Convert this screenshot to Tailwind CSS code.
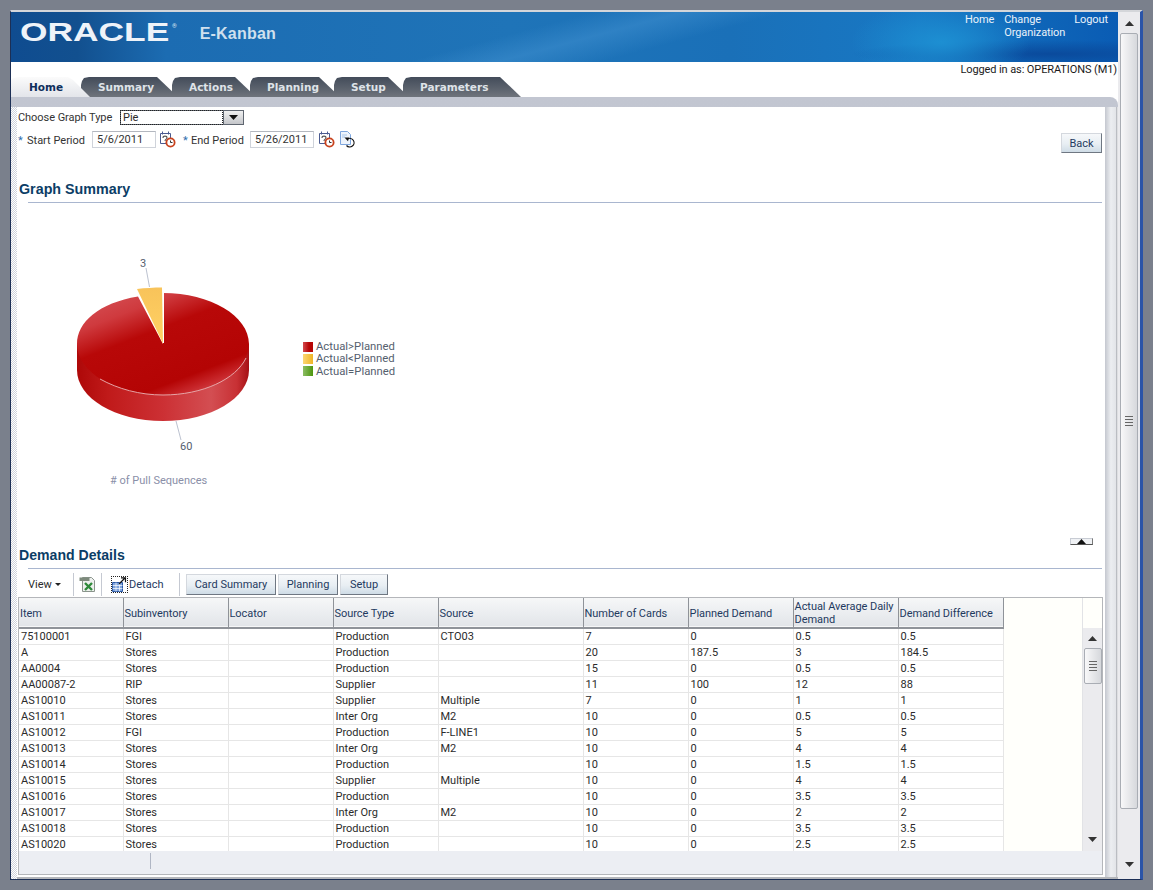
<!doctype html>
<html><head><meta charset="utf-8"><script src="https://cdn.jsdelivr.net/npm/@tailwindcss/browser@4"></script></head>
<body class="bg-[#7a808c] w-[1153px] h-[890px] overflow-hidden pt-[10px] pl-[10px] font-['Roboto','Liberation_Sans',sans-serif] text-[11px] leading-[13px] text-[#2b2b2b]">
<div class="w-[1133px] h-[870px] flex bg-white border-t-2 border-t-[#d4d6da] border-l border-l-[#1c2f55] border-r-[3px] border-r-[#2a54a8] border-b border-b-[#1c2f55]">

  <div class="w-[1107px] flex flex-col">
    <!-- banner -->
    <header class="h-[50px] shrink-0 flex justify-between bg-[radial-gradient(ellipse_90px_40px_at_930px_30px,#1d8fd2_0%,#1d8fd200_100%),radial-gradient(ellipse_200px_14px_at_1040px_42px,#0a4a9c_0%,#0a4a9c00_100%),linear-gradient(165deg,#ffffff00_45%,#3f8fcf88_52%,#ffffff00_60%),linear-gradient(90deg,#0f4c90_0%,#12508f_6%,#1c6cb2_14%,#1f74b8_45%,#1a70b8_65%,#1878c4_82%,#0f66b8_92%,#0a5cb4_100%)]">
      <div class="flex items-center">
        <span class="block ml-[9px] mt-[-10px] w-[110px] origin-left scale-x-[1.36] font-['Liberation_Sans'] font-bold text-[26px] leading-[26px] text-[#eef3f9]">ORACLE</span>
        <span class="ml-[42px] mt-[-22px] text-[6px] leading-[6px] text-[#dfe8f2]">®</span>
        <span class="ml-[23px] mt-[-6px] font-['Liberation_Sans'] font-bold text-[16px] leading-[20px] tracking-[0.2px] text-[#cfe0ee]">E-Kanban</span>
      </div>
      <nav class="flex pr-[10px] text-[#eaf2fa] text-[11px] tracking-[-0.1px]">
        <a class="mr-[10px] mt-[1px]">Home</a>
        <a class="w-[70px] mt-[1px]">Change Organization</a>
        <a class="mt-[1px]">Logout</a>
      </nav>
    </header>
    <div class="h-[15px] shrink-0 text-right pr-[1px] pt-[1px] text-[#1a1a1a] tracking-[-0.1px]">Logged in as: OPERATIONS (M1)</div>

    <!-- tabs -->
    <nav class="h-[20px] shrink-0 flex font-['DejaVu_Sans'] font-bold text-[10.5px] leading-[20px] text-[#dfe3e8]">
      <a class="relative z-10 w-[79px] pl-[18px] text-[#0f2f5c] bg-[linear-gradient(#fbfbfb,#e3e5ea)] [clip-path:polygon(0_100%,0_3px,2px_1px,8px_0,57px_0,62px_3px,79px_100%)]">Home</a>
      <a class="relative w-[97px] -ml-[9px] pl-[17px] bg-[linear-gradient(#434c5a,#5a616c_55%,#6f747c)] [clip-path:polygon(0_100%,0_8px,1px_4px,3px_1px,8px_0,76px_0,97px_100%)]">Summary</a>
      <a class="relative w-[84px] -ml-[6px] pl-[17px] bg-[linear-gradient(#434c5a,#5a616c_55%,#6f747c)] [clip-path:polygon(0_100%,0_8px,1px_4px,3px_1px,8px_0,63px_0,84px_100%)]">Actions</a>
      <a class="relative w-[90px] -ml-[6px] pl-[17px] bg-[linear-gradient(#434c5a,#5a616c_55%,#6f747c)] [clip-path:polygon(0_100%,0_8px,1px_4px,3px_1px,8px_0,69px_0,90px_100%)]">Planning</a>
      <a class="relative w-[75px] -ml-[6px] pl-[17px] bg-[linear-gradient(#434c5a,#5a616c_55%,#6f747c)] [clip-path:polygon(0_100%,0_8px,1px_4px,3px_1px,8px_0,54px_0,75px_100%)]">Setup</a>
      <a class="relative w-[118px] -ml-[6px] pl-[17px] bg-[linear-gradient(#434c5a,#5a616c_55%,#6f747c)] [clip-path:polygon(0_100%,0_8px,1px_4px,3px_1px,8px_0,97px_0,118px_100%)]">Parameters</a>
    </nav>

    <!-- panel -->
    <div class="flex-1 flex flex-col min-h-0 rounded-tr-[8px] bg-[linear-gradient(#c2c6d1,#d0d3dc)]">
      <div class="h-[10px] shrink-0"></div>
      <div class="flex-1 min-h-0 flex bg-[#e9eaee]">
        <div class="w-[6px] shrink-0 bg-[repeating-conic-gradient(#cfd3dc_0_25%,#ffffff_0_50%)] bg-[length:2px_2px]"></div>
        <main class="w-[1088px] shrink-0 bg-white flex flex-col border-b-2 border-b-[#b4b6ba]">
          <div class="flex items-center h-[15px] mt-[3px] ml-[1px]">
            <label class="w-[102px] text-[#333] tracking-[-0.05px]">Choose Graph Type</label>
            <div class="w-[124px] h-[15px] flex border border-[#5f6670]">
              <span class="flex-1 pl-[2px] leading-[14px] border border-dotted border-[#222] -m-[1px] mr-0">Pie</span>
              <span class="w-[20px] flex items-center justify-center bg-[linear-gradient(#f0f0f0,#c4c6ca)] border-l border-[#5f6670]">
                <svg width="9" height="5" viewBox="0 0 9 5"><path d="M0 0h9L4.500 5z" fill="#111"/></svg>
              </span>
            </div>
          </div>
          <div class="flex items-start h-[22px] mt-[6px] ml-[1px]">
            <span class="mt-[3px] text-[#2f6fae] w-[9px]">*</span>
            <label class="mt-[3px] w-[65px] text-[#333]">Start Period</label>
            <div class="w-[64px] h-[17px] pl-[4px] leading-[16px] border border-[#cfd3da] border-t-[#b3b7bf] text-[#333]">5/6/2011</div>
            <svg class="ml-[3px]" width="17" height="17" viewBox="0 0 17 17"><path d="M1.500 2.500h10v10h-10z" fill="#fff" stroke="#4a5a90"/><path d="M3.500 .5v3M9.500 .5v3" stroke="#4a5a90"/><path d="M4 7c0-2.500 4-2.500 4 0 0 1.200-2 1.200-2 3" fill="none" stroke="#555" stroke-width="1.100"/><circle cx="11.500" cy="11.500" r="5" fill="#c8421d"/><circle cx="11.500" cy="11.500" r="3.200" fill="#fff"/><path d="M11.500 9.500v2h2" fill="none" stroke="#333"/></svg>
            <span class="ml-[7px] mt-[3px] text-[#2f6fae] w-[8px]">*</span>
            <label class="mt-[3px] w-[59px] text-[#333]">End Period</label>
            <div class="w-[64px] h-[17px] pl-[4px] leading-[16px] border border-[#cfd3da] border-t-[#b3b7bf] text-[#333]">5/26/2011</div>
            <svg class="ml-[4px]" width="17" height="17" viewBox="0 0 17 17"><path d="M1.500 2.500h10v10h-10z" fill="#fff" stroke="#4a5a90"/><path d="M3.500 .5v3M9.500 .5v3" stroke="#4a5a90"/><path d="M4 7c0-2.500 4-2.500 4 0 0 1.200-2 1.200-2 3" fill="none" stroke="#555" stroke-width="1.100"/><circle cx="11.500" cy="11.500" r="5" fill="#c8421d"/><circle cx="11.500" cy="11.500" r="3.200" fill="#fff"/><path d="M11.500 9.500v2h2" fill="none" stroke="#333"/></svg>
            <svg class="ml-[4px]" width="17" height="17" viewBox="0 0 17 17"><path d="M1.500 .5h7l3 3v10h-10z" fill="#eef4fc" stroke="#7ea6de"/><path d="M3 4h5M3 6h3" stroke="#a8c6ea"/><path d="M8.500 8a4.300 4.300 0 1 1-1 6.500" fill="none" stroke="#111" stroke-width="1.200"/><path d="M5.500 6.500h4.500l-1 3.800z" fill="#111"/></svg>
            <button class="ml-auto mr-[3px] mt-[2px] w-[41px] h-[20px] text-[#1f3a5f] border border-[#d4d8de] border-b-[#6f7782] border-r-[#6f7782] bg-[linear-gradient(#f6f8fa,#e8eef3_55%,#cfdce6)]">Back</button>
          </div>

          <h2 class="mt-[26px] h-[20px] ml-[2px] font-['Liberation_Sans'] font-bold text-[14.300px] leading-[20px] text-[#0b3d66]">Graph Summary</h2>
          <div class="mt-[3px] ml-[11px] mr-[3px] h-[1px] shrink-0 bg-[#a9b6cf]"></div>

          <!-- chart -->
          <div class="relative h-[342px] shrink-0">
            <svg width="1088" height="342" viewBox="17 203 1088 342" class="block font-['Roboto']">
              <defs>
                <linearGradient id="t" x1="0.1" y1="0" x2="0.75" y2="1">
                  <stop offset="0" stop-color="#d65358"/><stop offset="0.22" stop-color="#cf3a3e"/><stop offset="0.42" stop-color="#b80808"/><stop offset="0.82" stop-color="#b40404"/><stop offset="0.92" stop-color="#c8272b"/><stop offset="1" stop-color="#d44a4e"/>
                </linearGradient>
                <linearGradient id="s" x1="0" y1="0" x2="1" y2="0">
                  <stop offset="0" stop-color="#ae0808"/><stop offset="0.18" stop-color="#c01a1a"/><stop offset="0.5" stop-color="#cc3034"/><stop offset="0.78" stop-color="#d34e52"/><stop offset="0.93" stop-color="#c83034"/><stop offset="1" stop-color="#a51014"/>
                </linearGradient>
                <linearGradient id="y" x1="0" y1="0" x2="0" y2="1"><stop offset="0" stop-color="#f8c35a"/><stop offset="1" stop-color="#ffd264"/></linearGradient>
                <linearGradient id="lr" x1="0" x2="1" y1="0" y2="0"><stop offset="0" stop-color="#d24a4e"/><stop offset="0.6" stop-color="#b60606"/></linearGradient>
                <linearGradient id="ly" x1="0" x2="1" y1="0" y2="0"><stop offset="0" stop-color="#fcd673"/><stop offset="1" stop-color="#efb526"/></linearGradient>
                <linearGradient id="lg" x1="0" x2="1" y1="0" y2="0"><stop offset="0" stop-color="#8cbd64"/><stop offset="1" stop-color="#4d960e"/></linearGradient>
              </defs>
              <path d="M77 344v26c0 28 38 51 86 51s86-23 86-51v-26z" fill="url(#s)"/>
              <path d="M163 344V293c47.500 0 86 22.800 86 51s-38.500 51-86 51-86-22.800-86-51c0-22 22-41 61-47.500z" fill="url(#t)"/>
              <path d="M100 379c18 10 40 16 63 16 40 0 73-16 83-37" fill="none" stroke="#e6a4a6" stroke-width="1"/>
              <path d="M163 343.500l-26-54.500c8-1 17-1.500 25-1.500z" fill="url(#y)"/>
              <path d="M163.500 293v50" stroke="#fff" stroke-width="1"/>
              <path d="M146 268l3.500 19M176 421l5 19" stroke="#bcc2d0" fill="none"/>
              <g font-size="11" fill="#55606e">
                <text x="140" y="267">3</text>
                <text x="180" y="450">60</text>
                <text x="110" y="484" fill="#8a8fa8">&#35; of Pull Sequences</text>
                <text x="316" y="350" font-size="11.300">Actual&gt;Planned</text>
                <text x="316" y="362" font-size="11.300">Actual&lt;Planned</text>
                <text x="316" y="375" font-size="11.300">Actual=Planned</text>
              </g>
              <rect x="303" y="342" width="10" height="10" fill="url(#lr)"/>
              <rect x="303" y="354" width="10" height="10" fill="url(#ly)"/>
              <rect x="303" y="366" width="10" height="10" fill="url(#lg)"/>
            </svg>
            <button class="absolute left-[1053px] top-[335px] w-[23px] h-[7px] flex items-start justify-center border border-[#c8ccd4] border-b-[#555] border-r-[#777] bg-[#f0f2f5]">
              <svg width="9" height="5" viewBox="0 0 9 5"><path d="M0 5h9L4.500 0z" fill="#111"/></svg>
            </button>
          </div>

          <h2 class="h-[20px] ml-[2px] font-['Liberation_Sans'] font-bold text-[14.100px] leading-[20px] text-[#0b3d66]">Demand Details</h2>
          <div class="mt-[3px] ml-[11px] mr-[3px] h-[1px] shrink-0 bg-[#a9b6cf]"></div>

          <!-- toolbar -->
          <div class="mt-[3px] h-[25px] shrink-0 flex items-center ml-[1px]">
            <span class="ml-[10px] w-[27px]">View</span>
            <svg width="6" height="3" viewBox="0 0 6 3"><path d="M0 0h6L3 3z" fill="#222"/></svg>
            <span class="ml-[12px] w-px h-[23px] bg-[#c5c9d2]"></span>
            <svg class="ml-[5px]" width="17" height="17" viewBox="0 0 17 17"><path d="M3.500 1.500h9l3 3v11h-12z" fill="#eef0ee" stroke="#8a948c"/><path d="M.5 1.500h10v3.500H.5z" fill="#7d8a7c"/><path d="M6 7l7 7M13 7l-7 7" stroke="#2f8a3a" stroke-width="2.400"/></svg>
            <span class="ml-[5px] w-px h-[23px] bg-[#c5c9d2]"></span>
            <span class="ml-[9px] w-[17px] h-[17px] border border-dotted border-[#222] flex items-center justify-center">
              <svg width="15" height="15" viewBox="0 0 15 15"><path d="M.500 5.500h10v9H.500z" fill="#7fa4dc" stroke="#2c5aa8"/><path d="M.500 8.500h10M.500 11.500h10M4 5.500v9M7.500 5.500v9" stroke="#fff" stroke-width=".7"/><path d="M7 7l6-6M9 .800h4.500v4.500" fill="none" stroke="#111" stroke-width="1.200"/></svg>
            </span>
            <span class="ml-[1px] w-[50px] text-[#1f3a5f]">Detach</span>
            <span class="w-px h-[23px] bg-[#c5c9d2]"></span>
            <button class="ml-[6px] w-[90px] h-[21px] text-[#1f3a5f] border border-[#d4d8de] border-b-[#6f7782] border-r-[#6f7782] bg-[linear-gradient(#f6f8fa,#e8eef3_55%,#cfdce6)]">Card Summary</button>
            <button class="ml-[2px] w-[60px] h-[21px] text-[#1f3a5f] border border-[#d4d8de] border-b-[#6f7782] border-r-[#6f7782] bg-[linear-gradient(#f6f8fa,#e8eef3_55%,#cfdce6)]">Planning</button>
            <button class="ml-[2px] w-[48px] h-[21px] text-[#1f3a5f] border border-[#d4d8de] border-b-[#6f7782] border-r-[#6f7782] bg-[linear-gradient(#f6f8fa,#e8eef3_55%,#cfdce6)]">Setup</button>
          </div>

          <!-- table -->
          <div class="ml-[1px] w-[1085px] h-[278px] flex flex-col shrink-0 border border-[#b4b6ba]">
            <div class="flex flex-1 min-h-0">
              <div class="w-[1063px] h-[253px] overflow-hidden bg-[#fffffb] shrink-0">
                <table class="table-fixed border-collapse w-[984px]">
                  <colgroup><col class="w-[104px]"><col class="w-[105px]"><col class="w-[105px]"><col class="w-[105px]"><col class="w-[145px]"><col class="w-[105px]"><col class="w-[105px]"><col class="w-[105px]"><col class="w-[105px]"></colgroup>
                  <thead class="text-left text-[#1f3a5f] font-normal">
                    <tr class="h-[30px] bg-[linear-gradient(#f6f7f8,#e2e5e9)] border-b-2 border-b-[#8f9399] [&>th]:font-normal [&>th]:px-[1px] [&>th]:pt-[1px] [&>th]:align-middle [&>th]:border-r [&>th]:border-r-[#8f9399] tracking-[-0.05px]">
                      <th>Item</th><th>Subinventory</th><th>Locator</th><th>Source Type</th><th>Source</th><th>Number of Cards</th><th>Planned Demand</th><th>Actual Average Daily Demand</th><th>Demand Difference</th>
                    </tr>
                  </thead>
                  <tbody class="bg-white [&>tr]:h-[16px] [&>tr]:border-b [&>tr]:border-b-[#e6e6e6] [&_td]:p-0 [&_td]:pl-[2px] [&_td]:border-r [&_td]:border-r-[#e6e6e6] [&_td]:whitespace-nowrap">
                    <tr><td>75100001</td><td>FGI</td><td></td><td>Production</td><td>CTO03</td><td>7</td><td>0</td><td>0.5</td><td>0.5</td></tr>
                    <tr><td>A</td><td>Stores</td><td></td><td>Production</td><td></td><td>20</td><td>187.5</td><td>3</td><td>184.5</td></tr>
                    <tr><td>AA0004</td><td>Stores</td><td></td><td>Production</td><td></td><td>15</td><td>0</td><td>0.5</td><td>0.5</td></tr>
                    <tr><td>AA00087-2</td><td>RIP</td><td></td><td>Supplier</td><td></td><td>11</td><td>100</td><td>12</td><td>88</td></tr>
                    <tr><td>AS10010</td><td>Stores</td><td></td><td>Supplier</td><td>Multiple</td><td>7</td><td>0</td><td>1</td><td>1</td></tr>
                    <tr><td>AS10011</td><td>Stores</td><td></td><td>Inter Org</td><td>M2</td><td>10</td><td>0</td><td>0.5</td><td>0.5</td></tr>
                    <tr><td>AS10012</td><td>FGI</td><td></td><td>Production</td><td>F-LINE1</td><td>10</td><td>0</td><td>5</td><td>5</td></tr>
                    <tr><td>AS10013</td><td>Stores</td><td></td><td>Inter Org</td><td>M2</td><td>10</td><td>0</td><td>4</td><td>4</td></tr>
                    <tr><td>AS10014</td><td>Stores</td><td></td><td>Production</td><td></td><td>10</td><td>0</td><td>1.5</td><td>1.5</td></tr>
                    <tr><td>AS10015</td><td>Stores</td><td></td><td>Supplier</td><td>Multiple</td><td>10</td><td>0</td><td>4</td><td>4</td></tr>
                    <tr><td>AS10016</td><td>Stores</td><td></td><td>Production</td><td></td><td>10</td><td>0</td><td>3.5</td><td>3.5</td></tr>
                    <tr><td>AS10017</td><td>Stores</td><td></td><td>Inter Org</td><td>M2</td><td>10</td><td>0</td><td>2</td><td>2</td></tr>
                    <tr><td>AS10018</td><td>Stores</td><td></td><td>Production</td><td></td><td>10</td><td>0</td><td>3.5</td><td>3.5</td></tr>
                    <tr><td>AS10020</td><td>Stores</td><td></td><td>Production</td><td></td><td>10</td><td>0</td><td>2.5</td><td>2.5</td></tr>
                  </tbody>
                </table>
              </div>
              <!-- table scrollbar -->
              <div class="w-[20px] h-[253px] shrink-0 flex flex-col border-l border-l-[#e2e3e6] bg-[#fffffb]">
                <div class="h-[30px] shrink-0"></div>
                <div class="flex-1 flex flex-col items-center bg-[#ebebee]">
                  <svg class="mt-[8px]" width="9" height="5" viewBox="0 0 9 5"><path d="M0 5h9L4.500 0z" fill="#333"/></svg>
                  <div class="mt-[7px] w-[18px] h-[36px] flex flex-col items-center justify-center gap-[2px] rounded-[2px] border border-[#a9adb4] bg-[linear-gradient(90deg,#f8f8f9,#d6d8dc)]">
                    <span class="block w-[8px] h-px bg-[#666]"></span><span class="block w-[8px] h-px bg-[#666]"></span><span class="block w-[8px] h-px bg-[#666]"></span><span class="block w-[8px] h-px bg-[#666]"></span>
                  </div>
                  <svg class="mt-auto mb-[9px]" width="9" height="5" viewBox="0 0 9 5"><path d="M0 0h9L4.500 5z" fill="#333"/></svg>
                </div>
              </div>
            </div>
            <div class="h-[23px] shrink-0 bg-[#eceef3] flex items-start">
              <span class="ml-[131px] mt-[2px] w-px h-[16px] bg-[#b0b6c4]"></span>
            </div>
          </div>
        </main>
        <div class="flex-1 bg-[linear-gradient(90deg,#c4c7cf,#eceef1_45%,#e2e4e8_85%,#a9acb2_90%,#ffffff)] border-b-2 border-b-[#b4b6ba]"></div>
      </div>
    </div>
  </div>

  <!-- window scrollbar -->
  <div class="flex-1 flex flex-col items-center bg-[#ebebee]">
    <svg class="mt-[9px]" width="9" height="5" viewBox="0 0 9 5"><path d="M0 5h9L4.500 0z" fill="#333"/></svg>
    <div class="mt-[7px] w-[18px] h-[776px] flex flex-col items-center justify-center gap-[2px] rounded-[2px] border border-[#a9adb4] bg-[linear-gradient(90deg,#f8f8f9,#d6d8dc)]">
      <span class="block w-[8px] h-px bg-[#666]"></span><span class="block w-[8px] h-px bg-[#666]"></span><span class="block w-[8px] h-px bg-[#666]"></span><span class="block w-[8px] h-px bg-[#666]"></span>
    </div>
    <svg class="mt-auto mb-[12px]" width="9" height="5" viewBox="0 0 9 5"><path d="M0 0h9L4.500 5z" fill="#333"/></svg>
  </div>
</div>
</body></html>
